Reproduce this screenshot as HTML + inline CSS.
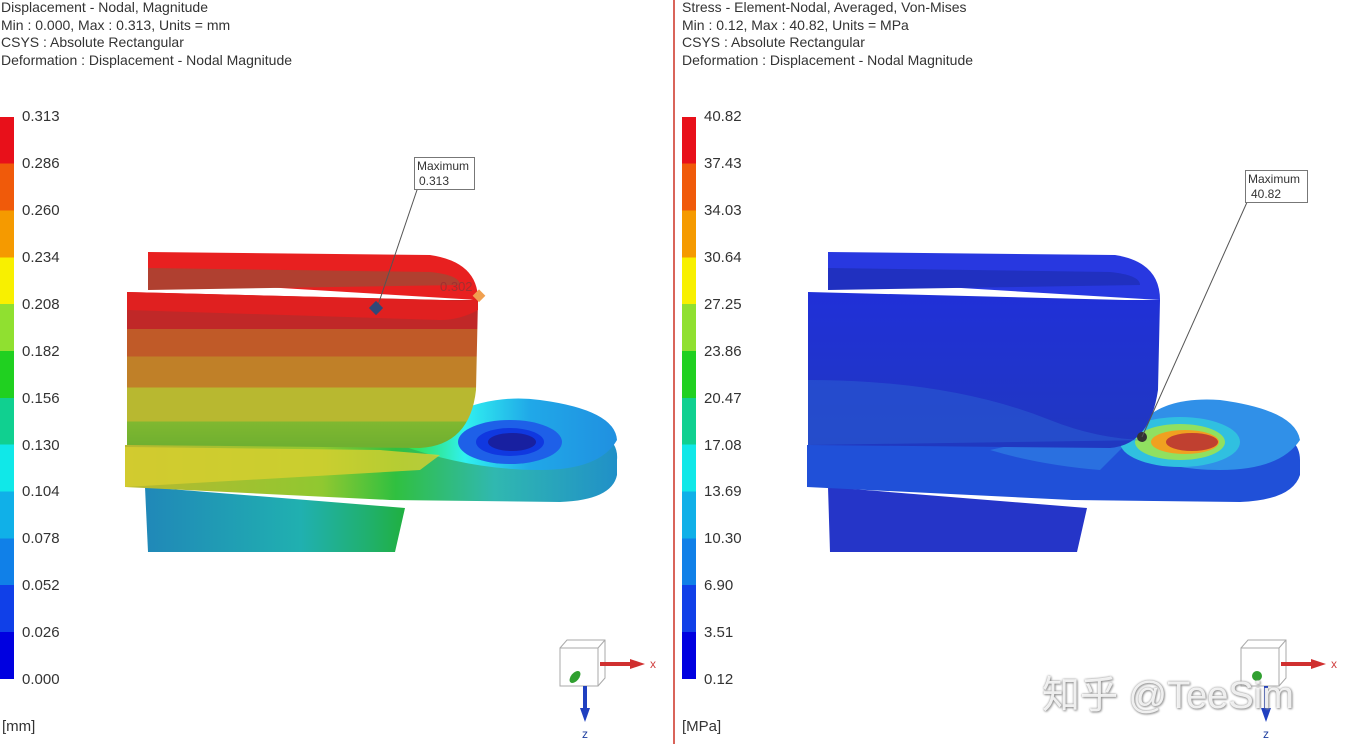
<!DOCTYPE html>
<html><head><meta charset="utf-8"><style>
html,body{margin:0;padding:0;background:#fff;width:1348px;height:744px;overflow:hidden;font-family:"Liberation Sans","Noto Sans CJK SC",sans-serif;}
.t{position:absolute;font-size:14px;color:#333;line-height:17.5px;white-space:nowrap}
.lg{position:absolute;font-size:15px;color:#333}
</style></head><body>
<div class="t" style="left:1px;top:-1px">Displacement - Nodal, Magnitude<br>Min : 0.000, Max : 0.313, Units = mm<br>CSYS : Absolute Rectangular<br>Deformation : Displacement - Nodal Magnitude</div>
<div class="t" style="left:682px;top:-1px">Stress - Element-Nodal, Averaged, Von-Mises<br>Min : 0.12, Max : 40.82, Units = MPa<br>CSYS : Absolute Rectangular<br>Deformation : Displacement - Nodal Magnitude</div>
<div style="position:absolute;left:673px;top:0;width:2px;height:744px;background:#d9645a"></div>

<svg width="1348" height="744" style="position:absolute;left:0;top:0">
<defs>
<linearGradient id="leg" x1="0" y1="0" x2="0" y2="1">
<stop offset="0" stop-color="#e8101a"/><stop offset=".083" stop-color="#e8101a"/>
<stop offset=".083" stop-color="#f05a0a"/><stop offset=".166" stop-color="#f05a0a"/>
<stop offset=".166" stop-color="#f59a00"/><stop offset=".25" stop-color="#f59a00"/>
<stop offset=".25" stop-color="#f8f000"/><stop offset=".333" stop-color="#f8f000"/>
<stop offset=".333" stop-color="#90e030"/><stop offset=".416" stop-color="#90e030"/>
<stop offset=".416" stop-color="#20d020"/><stop offset=".5" stop-color="#20d020"/>
<stop offset=".5" stop-color="#10d090"/><stop offset=".583" stop-color="#10d090"/>
<stop offset=".583" stop-color="#10e8e8"/><stop offset=".666" stop-color="#10e8e8"/>
<stop offset=".666" stop-color="#10b0e8"/><stop offset=".75" stop-color="#10b0e8"/>
<stop offset=".75" stop-color="#1080e8"/><stop offset=".833" stop-color="#1080e8"/>
<stop offset=".833" stop-color="#1040e8"/><stop offset=".916" stop-color="#1040e8"/>
<stop offset=".916" stop-color="#0000e0"/><stop offset="1" stop-color="#0000e0"/>
</linearGradient>
<linearGradient id="front" x1="0" y1="290" x2="0" y2="445" gradientUnits="userSpaceOnUse">
<stop offset="0" stop-color="#e02020"/><stop offset=".05" stop-color="#e02020"/>
<stop offset=".05" stop-color="#c02828"/><stop offset=".25" stop-color="#c02828"/>
<stop offset=".25" stop-color="#c05a28"/><stop offset=".43" stop-color="#c05a28"/>
<stop offset=".43" stop-color="#c08028"/><stop offset=".63" stop-color="#c08028"/>
<stop offset=".63" stop-color="#b8b830"/><stop offset=".85" stop-color="#b8b830"/>
<stop offset=".85" stop-color="#80b830"/><stop offset="1" stop-color="#70b030"/>
</linearGradient>
<linearGradient id="bot" x1="0" y1="0" x2="1" y2="0">
<stop offset="0" stop-color="#2088b8"/><stop offset=".6" stop-color="#20b0b0"/><stop offset=".85" stop-color="#20b070"/><stop offset="1" stop-color="#20b040"/>
</linearGradient>
<linearGradient id="plate" x1="0" y1="0" x2="1" y2="0">
<stop offset="0" stop-color="#b8b830"/><stop offset=".4" stop-color="#90c830"/><stop offset=".55" stop-color="#30c040"/><stop offset=".75" stop-color="#30b8b0"/><stop offset="1" stop-color="#2090c8"/>
</linearGradient>
<linearGradient id="ptop" x1="0" y1="0" x2="1" y2="0">
<stop offset="0" stop-color="#30e030"/><stop offset=".3" stop-color="#30f0f0"/><stop offset=".6" stop-color="#20a8e8"/><stop offset="1" stop-color="#2090e0"/>
</linearGradient>
<linearGradient id="blue" x1="0" y1="0" x2="0" y2="1">
<stop offset="0" stop-color="#2030d8"/><stop offset="1" stop-color="#2038c0"/>
</linearGradient>
</defs>
<rect x="0" y="117" width="14" height="562" fill="url(#leg)"/>
<rect x="682" y="117" width="14" height="562" fill="url(#leg)"/>

<!-- LEFT MODEL -->
<polygon points="145,487 405,508 395,552 148,552" fill="url(#bot)"/>
<path d="M125,445 L470,440 L560,425 Q620,428 617,460 L617,475 Q612,500 560,502 L390,500 L125,487 Z" fill="url(#plate)"/>
<path d="M400,445 Q470,390 540,400 Q615,410 617,440 Q600,470 540,470 Q470,470 400,445Z" fill="url(#ptop)"/>
<ellipse cx="510" cy="442" rx="52" ry="22" fill="#1e60e8"/>
<ellipse cx="510" cy="442" rx="34" ry="14" fill="#1038e0"/>
<ellipse cx="512" cy="442" rx="24" ry="9" fill="#1820a0"/>
<path d="M125,447 L380,450 L440,455 L420,470 L125,487Z" fill="#d8d030" opacity=".8"/>
<path d="M148,252 L430,255 Q478,262 478,300 L148,280Z" fill="#e82020"/>
<path d="M127,292 L445,300 Q478,300 478,300 L476,390 Q470,445 420,448 L127,445 Z" fill="url(#front)"/>
<path d="M148,268 L430,272 Q460,275 460,285 L148,290Z" fill="#b04030"/>
<path d="M127,292 L440,300 Q470,302 478,298 L478,310 Q460,320 440,320 L127,310Z" fill="#e02020"/>
<line x1="377" y1="308" x2="418" y2="187" stroke="#555" stroke-width="1"/>
<rect x="371" y="303" width="10" height="10" fill="#304878" transform="rotate(45 376 308)"/>
<rect x="475" y="291" width="9" height="9" fill="#f0a050" transform="rotate(45 479 295)"/>
<text x="440" y="291" font-size="13" fill="#a03030">0.302</text>
<rect x="414.5" y="157.5" width="60" height="32" fill="#fff" stroke="#777"/>
<text x="417" y="170" font-size="12" fill="#333">Maximum</text>
<text x="419" y="185" font-size="12" fill="#333">0.313</text>

<!-- RIGHT MODEL -->
<polygon points="828,487 1087,508 1077,552 830,552" fill="#2535c8"/>
<path d="M807,445 L1150,440 L1240,425 Q1300,428 1300,460 L1300,475 Q1292,500 1240,502 L1072,500 L807,487 Z" fill="#2050d8"/>
<path d="M990,450 Q1080,430 1150,420 L1100,470 Q1040,465 990,450Z" fill="#2a70e0"/>
<path d="M1130,440 Q1150,395 1220,400 Q1295,410 1300,440 Q1280,470 1220,470 Q1150,470 1130,440Z" fill="#3090e8"/>
<ellipse cx="1180" cy="442" rx="60" ry="25" fill="#30c0e0"/>
<ellipse cx="1180" cy="442" rx="45" ry="18" fill="#90e060"/>
<ellipse cx="1185" cy="442" rx="34" ry="12" fill="#f0a020"/>
<ellipse cx="1192" cy="442" rx="26" ry="9" fill="#c04030"/>
<path d="M828,252 L1115,255 Q1160,262 1160,300 L828,280Z" fill="#2838e0"/>
<path d="M808,292 L1125,300 L1160,300 L1158,390 Q1150,445 1110,448 L808,445 Z" fill="url(#blue)"/>
<path d="M828,268 L1110,272 Q1140,275 1140,285 L828,290Z" fill="#2030c0"/>
<path d="M808,380 Q950,380 1050,420 Q1100,440 1150,440 L808,445Z" fill="#2a5ad0" opacity=".6"/>
<circle cx="1142" cy="437" r="5" fill="#333"/>
<line x1="1142" y1="437" x2="1248" y2="200" stroke="#555" stroke-width="1"/>
<rect x="1245.5" y="170.5" width="62" height="32" fill="#fff" stroke="#777"/>
<text x="1248" y="183" font-size="12" fill="#333">Maximum</text>
<text x="1251" y="198" font-size="12" fill="#333">40.82</text>

<g>
<rect x="560" y="648" width="38" height="38" fill="#fff" stroke="#aaa"/>
<polyline points="560,648 567,640 605,640 605,678 598,686" fill="none" stroke="#aaa"/>
<line x1="598" y1="648" x2="605" y2="640" stroke="#aaa"/>
<line x1="600" y1="664" x2="632" y2="664" stroke="#d03030" stroke-width="4"/>
<polygon points="630,659 645,664 630,669" fill="#d03030"/>
<text x="650" y="668" font-size="12" fill="#d04040">x</text>
<line x1="585" y1="686" x2="585" y2="710" stroke="#2040c0" stroke-width="4"/>
<polygon points="580,708 585,722 590,708" fill="#2040c0"/>
<text x="582" y="738" font-size="12" fill="#2040a0">z</text>
<ellipse cx="575" cy="677" rx="4" ry="7" fill="#30a030" transform="rotate(40 575 677)"/>
</g>
<g transform="translate(681,0)">
<rect x="560" y="648" width="38" height="38" fill="#fff" stroke="#aaa"/>
<polyline points="560,648 567,640 605,640 605,678 598,686" fill="none" stroke="#aaa"/>
<line x1="598" y1="648" x2="605" y2="640" stroke="#aaa"/>
<line x1="600" y1="664" x2="632" y2="664" stroke="#d03030" stroke-width="4"/>
<polygon points="630,659 645,664 630,669" fill="#d03030"/>
<text x="650" y="668" font-size="12" fill="#d04040">x</text>
<line x1="585" y1="686" x2="585" y2="710" stroke="#2040c0" stroke-width="4"/>
<polygon points="580,708 585,722 590,708" fill="#2040c0"/>
<text x="582" y="738" font-size="12" fill="#2040a0">z</text>
<circle cx="576" cy="676" r="5" fill="#30a030"/>
</g>
</svg>

<div class="lg" style="left:22px;top:108px">0.313</div>
<div class="lg" style="left:22px;top:155px">0.286</div>
<div class="lg" style="left:22px;top:202px">0.260</div>
<div class="lg" style="left:22px;top:249px">0.234</div>
<div class="lg" style="left:22px;top:296px">0.208</div>
<div class="lg" style="left:22px;top:343px">0.182</div>
<div class="lg" style="left:22px;top:390px">0.156</div>
<div class="lg" style="left:22px;top:437px">0.130</div>
<div class="lg" style="left:22px;top:483px">0.104</div>
<div class="lg" style="left:22px;top:530px">0.078</div>
<div class="lg" style="left:22px;top:577px">0.052</div>
<div class="lg" style="left:22px;top:624px">0.026</div>
<div class="lg" style="left:22px;top:671px">0.000</div>
<div class="lg" style="left:2px;top:718px">[mm]</div>

<div class="lg" style="left:704px;top:108px">40.82</div>
<div class="lg" style="left:704px;top:155px">37.43</div>
<div class="lg" style="left:704px;top:202px">34.03</div>
<div class="lg" style="left:704px;top:249px">30.64</div>
<div class="lg" style="left:704px;top:296px">27.25</div>
<div class="lg" style="left:704px;top:343px">23.86</div>
<div class="lg" style="left:704px;top:390px">20.47</div>
<div class="lg" style="left:704px;top:437px">17.08</div>
<div class="lg" style="left:704px;top:483px">13.69</div>
<div class="lg" style="left:704px;top:530px">10.30</div>
<div class="lg" style="left:704px;top:577px">6.90</div>
<div class="lg" style="left:704px;top:624px">3.51</div>
<div class="lg" style="left:704px;top:671px">0.12</div>
<div class="lg" style="left:682px;top:718px">[MPa]</div>

<div style="position:absolute;left:1042px;top:664px;font-size:38px;color:rgba(255,255,255,.85);text-shadow:0 0 2px #888,1px 1px 2px #999;font-family:'Liberation Sans','Noto Sans CJK SC',sans-serif;white-space:nowrap">知乎 @TeeSim</div>
</body></html>
